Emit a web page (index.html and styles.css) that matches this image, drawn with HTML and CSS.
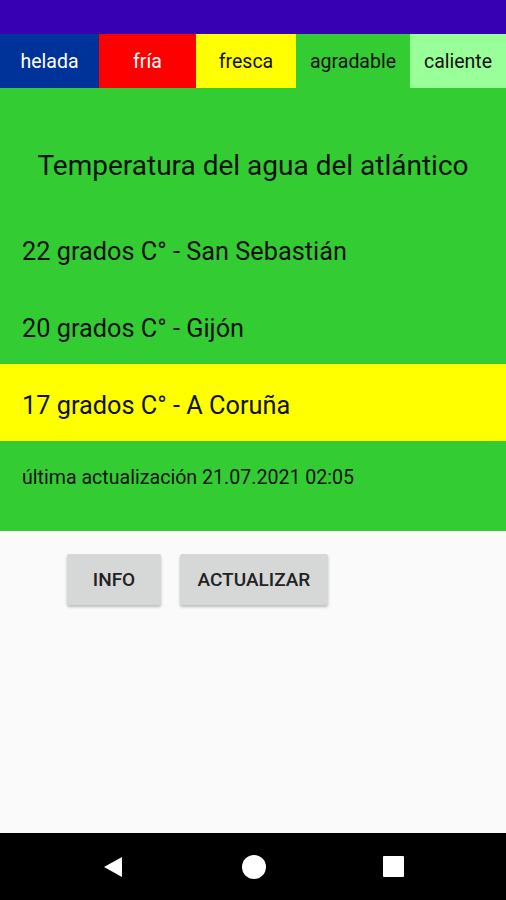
FILE: index.html
```html
<!DOCTYPE html>
<html lang="es">
<head>
    <meta charset="UTF-8">
    <meta name="viewport" content="width=device-width, initial-scale=1.0">
    <title>Temperatura del agua</title>
    <link rel="stylesheet" href="styles.css">
</head>
<body>
    <div class="status-bar"></div>

    <div class="legend">
        <div class="legend-item helada">helada</div>
        <div class="legend-item fria">fría</div>
        <div class="legend-item fresca">fresca</div>
        <div class="legend-item agradable">agradable</div>
        <div class="legend-item caliente">caliente</div>
    </div>

    <div class="panel">
        <h1>Temperatura del agua del atlántico</h1>
        <div class="row">22 grados C° - San Sebastián</div>
        <div class="row">20 grados C° - Gijón</div>
        <div class="row fresca">17 grados C° - A Coruña</div>
        <p class="updated">última actualización 21.07.2021 02:05</p>
    </div>

    <div class="buttons">
        <button>Info</button>
        <button>Actualizar</button>
    </div>

    <div class="nav-bar">
        <svg width="22" height="24" viewBox="0 0 22 24"><path d="M2 12 L20 2 L20 22 Z" fill="#fff"/></svg>
        <svg width="24" height="24" viewBox="0 0 24 24"><circle cx="12" cy="12" r="12" fill="#fff"/></svg>
        <svg width="22" height="22" viewBox="0 0 22 22"><rect x="0" y="0" width="21" height="21" rx="1" fill="#fff"/></svg>
    </div>
</body>
</html>
```

FILE: styles.css
```css
body {
    margin: 0;
    height: 900px;
    display: flex;
    flex-direction: column;
    font-family: Roboto, 'Noto Sans', sans-serif;
    background-color: #fafafa;
    color: #111;
}
.status-bar {
    height: 34px;
    background-color: #3700b3;
}
.legend {
    display: flex;
    height: 54px;
}
.legend-item {
    display: flex;
    align-items: center;
    justify-content: center;
    font-size: 19.5px;
}
.helada {
    width: 99px;
    background-color: #003399;
    color: white;
}
.fria {
    width: 97px;
    background-color: #ff0000;
    color: white;
}
.legend .fresca {
    width: 100px;
}
.fresca {
    background-color: #ffff00;
}
.agradable {
    width: 114px;
    background-color: #33cc33;
}
.caliente {
    flex: 1;
    background-color: #99ff99;
}
.panel {
    background-color: #33cc33;
    padding-bottom: 18px;
}
h1 {
    margin: 0;
    height: 90px;
    padding-top: 32px;
    display: flex;
    align-items: center;
    justify-content: center;
    font-size: 28px;
    font-weight: normal;
}
.row {
    height: 77px;
    box-sizing: border-box;
    padding-top: 5px;
    display: flex;
    align-items: center;
    padding-left: 22px;
    font-size: 25.3px;
}
.updated {
    margin: 0;
    height: 72px;
    display: flex;
    align-items: center;
    padding-left: 22px;
    font-size: 19.6px;
}
.buttons {
    display: flex;
    gap: 19px;
    padding: 23px 0 0 67px;
}
button {
    font-family: Roboto, sans-serif;
    font-weight: 500;
    font-size: 19px;
    text-transform: uppercase;
    color: #222;
    background-color: #d6d7d7;
    border: none;
    border-radius: 2px;
    height: 51px;
    padding: 0 17.5px;
    min-width: 94px;
    box-shadow: 0 2px 3px rgba(0, 0, 0, 0.25);
}
.nav-bar {
    margin-top: auto;
    height: 67px;
    background-color: #000;
    display: flex;
    align-items: center;
    justify-content: space-between;
    padding: 0 101px 0 102px;
}
```
